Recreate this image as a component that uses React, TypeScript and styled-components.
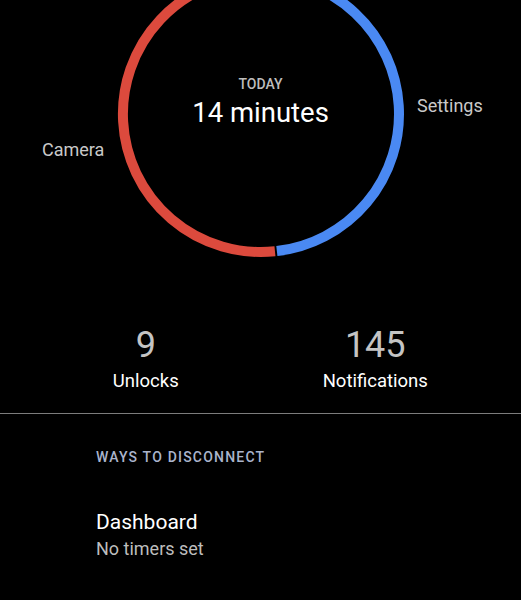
import React from "react";
import styled, { createGlobalStyle } from "styled-components";

const GlobalStyle = createGlobalStyle`
    html, body {
        margin: 0;
        padding: 0;
        background: #000;
    }

    body {
        font-family: Roboto, "Noto Sans", "Liberation Sans", sans-serif;
        -webkit-font-smoothing: antialiased;
    }
`;

type Slice = { label: string; color: string; from: number; to: number };

const CX = 150;
const CY = 114;
const R = 138;

const slices: Slice[] = [
    { label: "Settings", color: "#4a89f3", from: -90.5, to: 83.4 },
    { label: "Camera", color: "#dc4a3d", from: 84.2, to: 269.5 },
];

const point = (deg: number) => {
    const rad = (deg * Math.PI) / 180;
    return `${(CX + R * Math.cos(rad)).toFixed(2)} ${(CY + R * Math.sin(rad)).toFixed(2)}`;
};

const arcPath = (from: number, to: number) => {
    const large = to - from > 180 ? 1 : 0;
    return `M ${point(from)} A ${R} ${R} 0 ${large} 1 ${point(to)}`;
};

const stats = [
    { value: "9", label: "Unlocks" },
    { value: "145", label: "Notifications" },
];

const App = () => {
    return (
        <Page>
            <GlobalStyle />
            <ChartArea>
                <Ring width={300} height={262} viewBox="0 0 300 262">
                    {slices.map((s) => (
                        <path
                            key={s.label}
                            d={arcPath(s.from, s.to)}
                            fill="none"
                            stroke={s.color}
                            strokeWidth={10}
                            strokeLinecap="butt"
                        />
                    ))}
                </Ring>
                <CenterText>
                    <Caption>TODAY</Caption>
                    <Total>14 minutes</Total>
                </CenterText>
                <SliceLabel $top={139} $left={42}>
                    Camera
                </SliceLabel>
                <SliceLabel $top={95} $left={417}>
                    Settings
                </SliceLabel>
            </ChartArea>

            <Stats>
                {stats.map((s) => (
                    <Stat key={s.label}>
                        <StatValue>{s.value}</StatValue>
                        <StatLabel>{s.label}</StatLabel>
                    </Stat>
                ))}
            </Stats>

            <Divider />

            <Section>
                <SectionTitle>WAYS TO DISCONNECT</SectionTitle>
                <Item>
                    <ItemTitle>Dashboard</ItemTitle>
                    <ItemSub>No timers set</ItemSub>
                </Item>
            </Section>
        </Page>
    );
};

export default App;

const Page = styled.div`
    width: 521px;
    min-height: 600px;
    background: #000;
    overflow: hidden;
`;

const ChartArea = styled.div`
    position: relative;
    height: 262px;
`;

const Ring = styled.svg`
    display: block;
    margin: 0 auto;
`;

const CenterText = styled.div`
    position: absolute;
    top: 76px;
    left: 0;
    right: 0;
    display: flex;
    flex-direction: column;
    align-items: center;
`;

const Caption = styled.div`
    font-size: 14px;
    line-height: 16px;
    font-weight: 500;
    color: #bdbdbd;
`;

const Total = styled.div`
    margin-top: 5px;
    font-size: 27.5px;
    line-height: 32px;
    color: #fff;
`;

const SliceLabel = styled.div<{ $top: number; $left: number }>`
    position: absolute;
    top: ${(p) => p.$top}px;
    left: ${(p) => p.$left}px;
    font-size: 18px;
    line-height: 22px;
    color: #c9c9c9;
`;

const Stats = styled.div`
    display: grid;
    grid-template-columns: 1fr 1fr;
    width: 459px;
    margin: 0 auto;
    padding: 62px 0 21px;
`;

const Stat = styled.div`
    display: flex;
    flex-direction: column;
    align-items: center;
`;

const StatValue = styled.div`
    font-size: 36px;
    line-height: 42px;
    font-weight: 400;
    color: #c4c4c4;
`;

const StatLabel = styled.div`
    margin-top: 4px;
    font-size: 18.5px;
    line-height: 22px;
    color: #fff;
`;

const Divider = styled.hr`
    margin: 0;
    border: 0;
    height: 1px;
    background: #7c7c7c;
`;

const Section = styled.div`
    padding: 35px 0 0 96px;
`;

const SectionTitle = styled.div`
    font-size: 14px;
    line-height: 16px;
    font-weight: 500;
    letter-spacing: 1.2px;
    color: #aab4cc;
`;

const Item = styled.div`
    margin-top: 44px;
`;

const ItemTitle = styled.div`
    font-size: 21px;
    line-height: 26px;
    color: #fff;
`;

const ItemSub = styled.div`
    margin-top: 3px;
    font-size: 18px;
    line-height: 22px;
    color: #bdbdbd;
`;
